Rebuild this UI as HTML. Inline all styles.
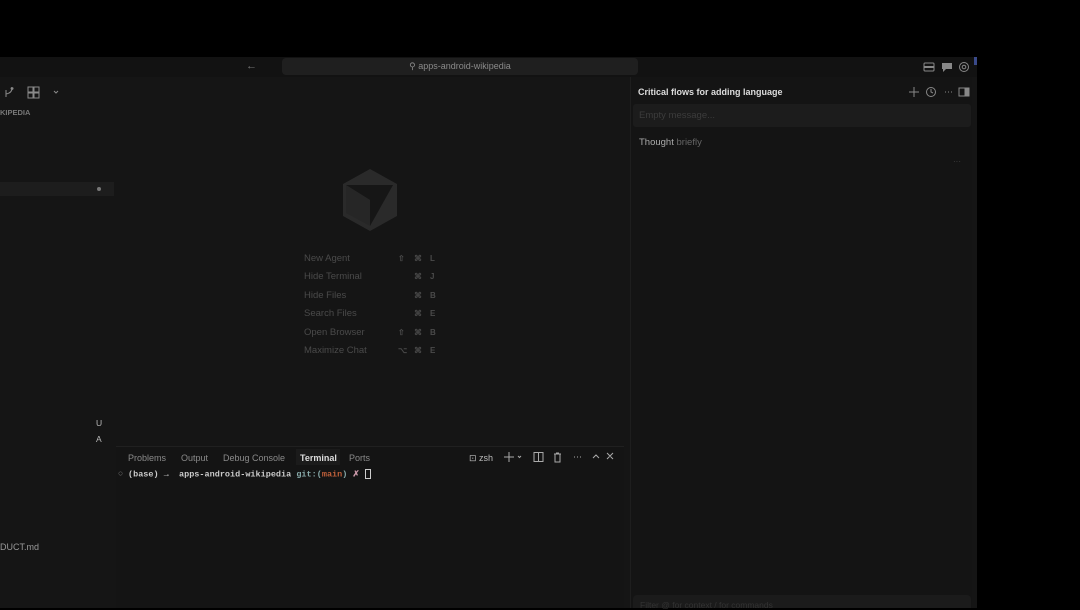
<!DOCTYPE html>
<html><head><meta charset="utf-8"><style>
*{margin:0;padding:0;box-sizing:border-box}
body{width:1080px;height:608px;background:#000;position:relative;overflow:hidden;font-family:"Liberation Sans",sans-serif}
.a{position:absolute}
.win{left:0;top:57px;width:977px;height:551px;background:#151515}
.tb{left:0;top:57px;width:977px;height:20px;background:#121212}
.search{left:282px;top:58px;width:356px;height:17px;background:#1f1f1f;border-radius:4px;color:#8a8a8a;font-size:9px;text-align:center;line-height:17px}
.chat{left:630px;top:77px;width:342px;height:531px;background:#141414;border-left:1px solid #1e1e1e}
.t{font-size:9.5px;color:#4a4a4a}
.k{font-size:8px;color:#4a4a4a;font-weight:bold}
.term{left:116px;top:446px;width:508px;height:162px;background:#141414;border-top:1px solid #202020}
.tab{font-size:9px;color:#8a8a8a;top:453px}
.mono{font-family:"Liberation Mono",monospace;font-size:8.5px;color:#ccc;font-weight:bold}
</style></head><body>
<div class="a win"></div>
<div class="a tb"></div>
<div class="a" style="left:974px;top:57px;width:3px;height:8px;background:#3a4a8a"></div>
<div class="a" style="left:246px;top:60px;color:#777;font-size:11px">←</div>
<div class="a search">⚲ apps-android-wikipedia</div>
<svg class="a" style="left:2px;top:85px" width="70" height="14" viewBox="0 0 70 14" fill="none" stroke="#8a8a8a" stroke-width="1"><path d="M4 12 L4 5 M4 9 Q10 8 10 3 M10 2.5 a1 1 0 1 0 0.1 0"/><rect x="26" y="2" width="5" height="5"/><rect x="32" y="2" width="5" height="5" /><rect x="26" y="8" width="5" height="5"/><rect x="32" y="8" width="5" height="5"/><path d="M52 6 l2 2 2-2"/></svg>
<div class="a" style="left:0;top:108px;font-size:7.5px;color:#777;font-weight:bold">KIPEDIA</div>
<div class="a" style="left:0;top:182px;width:114px;height:14px;background:#1d1d1d"></div>
<div class="a" style="left:97px;top:187px;width:4px;height:4px;border-radius:2px;background:#777"></div>
<div class="a" style="left:96px;top:418px;font-size:8.5px;color:#bbb">U</div>
<div class="a" style="left:96px;top:434px;font-size:8.5px;color:#bbb">A</div>
<div class="a" style="left:0;top:542px;font-size:9px;color:#999">DUCT.md</div>
<svg class="a" style="left:341px;top:168px" width="58" height="64" viewBox="0 0 58 64"><path d="M29 1 L56 16 L56 48 L29 63 L2 48 L2 16Z" fill="#2a2a2a"/><path d="M5 17 L52 17 L29 58 L29 32Z" fill="#161616"/><path d="M5 17 L29 32 L29 58 L5 45Z" fill="#262626"/></svg>
<div class="a t" style="left:304px;top:253px">New Agent</div>
<div class="a t" style="left:304px;top:271px">Hide Terminal</div>
<div class="a t" style="left:304px;top:290px">Hide Files</div>
<div class="a t" style="left:304px;top:308px">Search Files</div>
<div class="a t" style="left:304px;top:327px">Open Browser</div>
<div class="a t" style="left:304px;top:345px">Maximize Chat</div>
<div class="a k" style="left:398px;top:254px">⇧</div><div class="a k" style="left:414px;top:254px">⌘</div><div class="a k" style="left:430px;top:254px">L</div>
<div class="a k" style="left:414px;top:272px">⌘</div><div class="a k" style="left:430px;top:272px">J</div>
<div class="a k" style="left:414px;top:291px">⌘</div><div class="a k" style="left:430px;top:291px">B</div>
<div class="a k" style="left:414px;top:309px">⌘</div><div class="a k" style="left:430px;top:309px">E</div>
<div class="a k" style="left:398px;top:328px">⇧</div><div class="a k" style="left:414px;top:328px">⌘</div><div class="a k" style="left:430px;top:328px">B</div>
<div class="a k" style="left:398px;top:346px">⌥</div><div class="a k" style="left:414px;top:346px">⌘</div><div class="a k" style="left:430px;top:346px">E</div>
<div class="a term"></div>
<div class="a tab" style="left:128px">Problems</div>
<div class="a tab" style="left:181px">Output</div>
<div class="a tab" style="left:223px">Debug Console</div>
<div class="a" style="left:296px;top:449px;width:44px;height:16px;background:#1b1b1b"></div>
<div class="a tab" style="left:300px;color:#ddd;font-weight:bold">Terminal</div>
<div class="a tab" style="left:349px">Ports</div>
<div class="a tab" style="left:469px;color:#bbb">⊡ zsh</div>
<svg class="a" style="left:503px;top:451px" width="115" height="12" viewBox="0 0 115 12" fill="none" stroke="#aaa" stroke-width="1"><path d="M6 1v10M1 6h10M15 5l1.5 1.5 1.5-1.5"/><rect x="31" y="1.5" width="9" height="9"/><path d="M35.5 1.5v9"/><path d="M51 3h7M52 3v8h5V3M53 2h3"/><path d="M71 6h1M74 6h1M77 6h1M90 7l3-3 3 3M104 2l6 6M110 2l-6 6"/></svg>
<div class="a mono" style="left:118px;top:469px;font-weight:normal;color:#777">○</div>
<div class="a mono" style="left:128px;top:469px">(base) → &nbsp;apps-android-wikipedia <span style="color:#8aa">git:(</span><span style="color:#c0603a">main</span><span style="color:#8aa">)</span> <span style="color:#c9a">✗</span> <span style="display:inline-block;width:6px;height:10px;border:1px solid #ccc;vertical-align:middle"></span></div>
<div class="a chat"></div>
<svg class="a" style="left:923px;top:61px" width="48" height="12" viewBox="0 0 48 12"><rect x="1" y="2" width="10" height="8" rx="1" fill="none" stroke="#888"/><rect x="1" y="5" width="10" height="2" fill="#888"/><path d="M19 2h10v6h-6l-3 3v-3h-1z" fill="#888"/><circle cx="41" cy="6" r="4.5" fill="none" stroke="#888"/><circle cx="41" cy="6" r="1.8" fill="none" stroke="#888"/></svg>
<div class="a" style="left:638px;top:87px;font-size:9px;color:#ddd;font-weight:bold">Critical flows for adding language</div>
<svg class="a" style="left:909px;top:86px" width="62" height="12" viewBox="0 0 62 12" fill="none" stroke="#888" stroke-width="1"><path d="M5 1v10M0 6h10"/><circle cx="22" cy="6" r="4.5"/><path d="M22 3v3l2 1"/><path d="M36 6h1M39 6h1M42 6h1"/><rect x="50" y="2" width="10" height="8"/><rect x="56" y="2" width="4" height="8" fill="#888"/></svg>
<div class="a" style="left:633px;top:104px;width:338px;height:23px;background:#1c1c1c;border-radius:3px"></div>
<div class="a" style="left:639px;top:110px;font-size:9.5px;color:#3c3c3c">Empty message...</div>
<div class="a" style="left:639px;top:137px;font-size:9.5px;color:#aaa">Thought <span style="color:#666">briefly</span></div>
<div class="a" style="left:953px;top:157px;font-size:8px;color:#444">···</div>
<div class="a" style="left:633px;top:595px;width:338px;height:13px;background:#1b1b1b;border-radius:4px 4px 0 0"></div>
<div class="a" style="left:640px;top:600px;font-size:8.5px;color:#333">Filter @ for context / for commands</div>
</body></html>
